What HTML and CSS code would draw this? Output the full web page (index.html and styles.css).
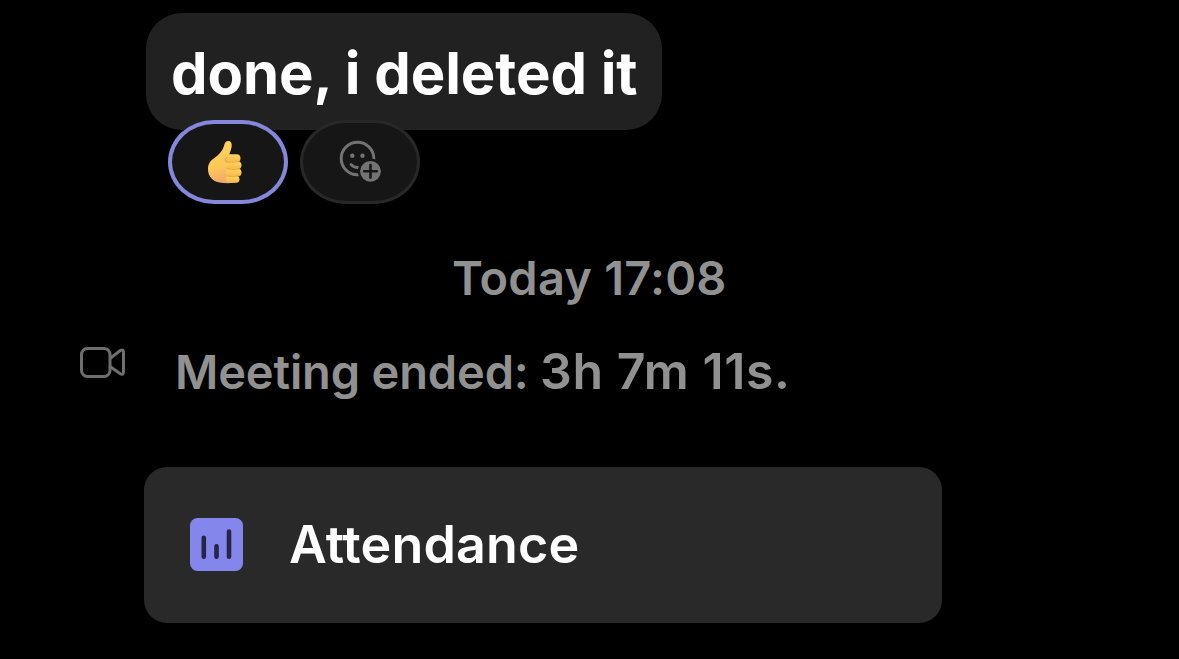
FILE: index.html
```html
<!DOCTYPE html>
<html lang="en">
<head>
<meta charset="utf-8">
<title>Meeting chat</title>
<link rel="stylesheet" href="styles.css">
</head>
<body>
<main class="chat">
  <div class="bubble"><span class="bubble-text">done, i deleted it</span></div>
  <div class="reactions">
    <div class="pill pill-active">
      <svg class="thumb" viewBox="0 0 36 44" role="img" aria-label="Thumbs up">
        <defs>
          <linearGradient id="skin" x1="0.4" y1="0" x2="0.6" y2="1">
            <stop offset="0" stop-color="#ffd45c"/>
            <stop offset="0.6" stop-color="#fdc658"/>
            <stop offset="1" stop-color="#eda470"/>
          </linearGradient>
          <linearGradient id="finger" x1="0" y1="0" x2="0" y2="1">
            <stop offset="0" stop-color="#ffd65c"/>
            <stop offset="1" stop-color="#f7b850"/>
          </linearGradient>
        </defs>
        <path fill="url(#skin)" d="M17 6C17.600 2.600 19 1 21.200 1C24.200 1 25.200 3.700 24.600 7C24 10 23 12.500 22 15L29 15L31 42Q26 43.600 16 43C6 42.500 1 37 1 29C1 23.500 3.500 20.500 8 17.500C12 14.700 15.500 11 17 6Z"/>
        <rect x="18" y="14.200" width="15.500" height="8" rx="4" fill="url(#finger)"/>
        <rect x="18.500" y="21.200" width="16" height="8" rx="4" fill="url(#finger)"/>
        <rect x="19" y="28.500" width="15.500" height="8" rx="4" fill="url(#finger)"/>
        <rect x="19" y="35.800" width="13.500" height="7" rx="3.500" fill="url(#finger)"/>
        <path fill="none" stroke="#d98a35" stroke-width=".9" stroke-linecap="round" opacity=".75" d="M20 22Q26 22.500 32 21.600M20.500 29Q27 29.700 32.500 28.800M21 36.200Q27 36.700 32 35.900M20 17C17.500 19 17.500 22 20 22"/>
      </svg>
    </div>
    <div class="pill">
      <svg class="add-reaction" viewBox="0 0 44 44" role="img" aria-label="Add reaction">
        <circle cx="18.500" cy="18.500" r="16.300" fill="none" stroke="#737373" stroke-width="3"/>
        <circle cx="13.300" cy="15.700" r="2.200" fill="#737373"/>
        <circle cx="23.500" cy="15.700" r="2.200" fill="#737373"/>
        <path d="M12 24.500Q15.500 28.200 20 27.300" fill="none" stroke="#737373" stroke-width="2.800" stroke-linecap="round"/>
        <circle cx="31.500" cy="31.300" r="12.700" fill="#161616"/>
        <circle cx="31.500" cy="31.300" r="10.400" fill="#737373"/>
        <path d="M31.500 25V37.600M25.200 31.300H37.800" stroke="#161616" stroke-width="2.600" stroke-linecap="round"/>
      </svg>
    </div>
  </div>
  <div class="timestamp"><span class="timestamp-text">Today 17:08</span></div>
  <div class="event">
    <svg class="camera" viewBox="0 0 46 32" fill="none" stroke="#6e6e6e" stroke-width="3" stroke-linejoin="round" aria-hidden="true">
      <rect x="1.500" y="1.500" width="28.500" height="28" rx="6"/>
      <path d="M30 11.500L40.300 3.500Q43.500 1.700 43.500 5.200V25Q43.500 28.500 40.300 26.700L30 19.500"/>
    </svg>
    <div class="event-text"><span class="event-label">Meeting ended:</span><span class="event-duration">3h 7m 11s.</span></div>
  </div>
  <div class="card">
    <svg class="chart" viewBox="0 0 54 54" aria-hidden="true">
      <rect x="1" y="0" width="53" height="53" rx="7.500" fill="#8486ec"/>
      <path d="M14.800 19.700V38.800M27.500 28.300V38.800M40 13.500V38.800" stroke="#252548" stroke-width="4.600" stroke-linecap="round"/>
    </svg>
    <span class="card-title">Attendance</span>
  </div>
</main>
</body>
</html>
```
FILE: styles.css
```css
body {
  margin: 0;
  background: #000;
  font-family: Inter, "Liberation Sans", sans-serif;
}

.chat {
  box-sizing: border-box;
  width: 1179px;
  height: 659px;
  padding-top: 13px;
  overflow: hidden;
  display: flex;
  flex-direction: column;
  white-space: nowrap;
}

.bubble {
  box-sizing: border-box;
  width: 516px;
  height: 117px;
  margin-left: 146px;
  padding: 25px 0 0 25px;
  border-radius: 36px;
  background: #212121;
}

.bubble-text {
  display: block;
  color: #fff;
  font-size: 58px;
  font-weight: 700;
  line-height: 70px;
  letter-spacing: -0.05px;
}

.reactions {
  display: flex;
  gap: 12px;
  margin: -10px 0 0 168px;
}

.pill {
  box-sizing: border-box;
  display: flex;
  align-items: center;
  justify-content: center;
  width: 120px;
  height: 84px;
  border: 3px solid #282828;
  border-radius: 46px / 42px;
  background: #161616;
}

.pill-active {
  border: 4px solid #8587da;
}

.thumb {
  width: 36px;
  height: 44px;
  margin-left: -6px;
}

.add-reaction {
  width: 44px;
  height: 44px;
  margin-left: 2px;
}

.timestamp {
  display: flex;
  margin: 46px 0 0 452px;
}

.timestamp-text {
  color: #919191;
  font-size: 47px;
  font-weight: 600;
  line-height: 56px;
  letter-spacing: 0.2px;
}

.event {
  display: flex;
  margin: 35px 0 0 80px;
}

.camera {
  width: 46px;
  height: 32px;
  margin-top: 6px;
}

.event-text {
  display: flex;
  align-items: baseline;
  height: 60px;
  margin-left: 49px;
  color: #919191;
  line-height: 60px;
}

.event-label {
  width: 365px;
  font-size: 47px;
  font-weight: 600;
  letter-spacing: -0.15px;
}

.event-duration {
  font-size: 50px;
  font-weight: 600;
  letter-spacing: 0.6px;
}

.card {
  box-sizing: border-box;
  display: flex;
  align-items: center;
  width: 798px;
  height: 156px;
  margin: 66px 0 0 144px;
  padding-left: 45px;
  border-radius: 23px;
  background: #292929;
}

.chart {
  width: 54px;
  height: 54px;
}

.card-title {
  margin-left: 46px;
  color: #fff;
  font-size: 52px;
  font-weight: 600;
  line-height: 64px;
  letter-spacing: 0.15px;
}
```
